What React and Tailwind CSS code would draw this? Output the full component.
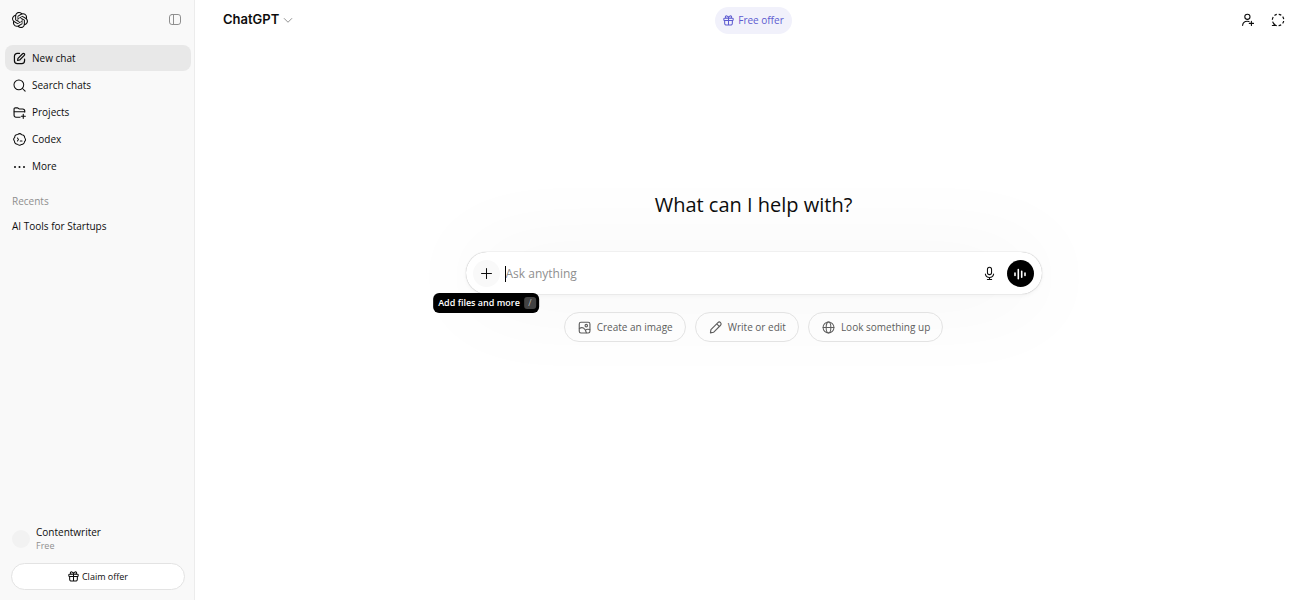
import { SiOpenai } from "react-icons/si";

const Icon = ({ className = "size-[15px]", children, strokeWidth = 1.1 }) => (
  <svg
    viewBox="0 0 16 16"
    fill="none"
    stroke="currentColor"
    strokeWidth={strokeWidth}
    strokeLinecap="round"
    strokeLinejoin="round"
    aria-hidden="true"
    className={`shrink-0 ${className}`}
  >
    {children}
  </svg>
);

const PanelIcon = () => (
  <Icon className="size-4" strokeWidth={1}>
    <rect x="2.5" y="2.5" width="11" height="10" rx="2.4" />
    <path d="M6.5 2.5v10" />
  </Icon>
);

const EditIcon = () => (
  <Icon strokeWidth={1.3}>
    <path d="M8 2.6H5.6A3 3 0 0 0 2.6 5.6v4.8a3 3 0 0 0 3 3h4.8a3 3 0 0 0 3-3V8.6" />
    <path d="M6 10l.4-2.2 4.9-4.9a1.25 1.25 0 0 1 1.8 1.8L8.2 9.6z" />
  </Icon>
);

const SearchIcon = () => (
  <Icon>
    <circle cx="7.3" cy="7.3" r="5.2" />
    <path d="M11.2 11.2l2.8 2.8" />
  </Icon>
);

const ProjectsIcon = () => (
  <Icon strokeWidth={1.2}>
    <path d="M8.5 13H4.2a2 2 0 0 1-2-2V4.4a1.4 1.4 0 0 1 1.4-1.4h2.2c.8 0 1.2 1.3 2.1 1.3h3.5c1.3 0 2.2.8 2.2 2.2v.9" />
    <path d="M2.4 7.2h11M12 9.8v4.4M9.8 12h4.4" />
  </Icon>
);

const CodexIcon = () => (
  <Icon>
    <path d="M6.2 2.6a3 3 0 0 1 4.2.3 3 3 0 0 1 3.1 3.2 3 3 0 0 1-.2 4.2 3 3 0 0 1-3.2 3 3 3 0 0 1-4.3-.2 3 3 0 0 1-3.1-3.2 3 3 0 0 1 .2-4.2 3 3 0 0 1 3.3-3.1z" />
    <path d="M5.8 6.4L6.9 8l-1.1 1.6M8.8 9.7h1.9" />
  </Icon>
);

const MoreIcon = () => (
  <svg viewBox="0 0 16 16" fill="currentColor" aria-hidden="true" className="size-[15px] shrink-0">
    <circle cx="3.2" cy="8.5" r="1.1" />
    <circle cx="8" cy="8.5" r="1.1" />
    <circle cx="12.8" cy="8.5" r="1.1" />
  </svg>
);

const GiftIcon = ({ className = "size-[11px]" }) => (
  <Icon className={className} strokeWidth={1.5}>
    <rect x="1.2" y="4.6" width="13.6" height="3.4" rx="1" />
    <path d="M2.4 8v4a2.6 2.6 0 0 0 2.6 2.6h6a2.6 2.6 0 0 0 2.6-2.6V8M8 4.6v9.8" />
    <path d="M8 4.4C7.6 2.4 6.7 1.4 5.6 1.4a1.5 1.5 0 0 0-1.2 2.8M8 4.4c.4-2 1.3-3 2.4-3a1.5 1.5 0 0 1 1.2 2.8" />
  </Icon>
);

const AddPersonIcon = () => (
  <Icon className="size-4" strokeWidth={1.1}>
    <circle cx="7.4" cy="4.8" r="2.6" />
    <path d="M2.6 13.4c.3-2.7 2.2-4.1 4.6-4.1.7 0 1.200.1 1.800.3M11.400 9.300v4.200M9.300 11.400h4.200" />
  </Icon>
);

const TemporaryChatIcon = () => (
  <Icon className="size-4" strokeWidth={1.2}>
    <path d="M2.400 13.500h3.200l-1.600-1.500" />
    <path
      d="M4 12a5.700 5.700 0 1 1 4 1.700 5.700 5.700 0 0 1-2.400-.5"
      strokeDasharray="2.700 1.900"
      strokeLinecap="butt"
    />
  </Icon>
);

const MicIcon = () => (
  <Icon>
    <rect x="5.800" y="1.400" width="4.400" height="7.800" rx="2.200" />
    <path d="M3.600 8.600a4.500 4.500 0 0 0 8.800 0M8 12.200v2.300M5.700 14.500h4.600" />
  </Icon>
);

const VoiceIcon = () => (
  <Icon className="size-4" strokeWidth={1.600}>
    <path d="M3 7v2.400M6.300 3.600v9.200M9.700 5.200v6M13 7v2.400" />
  </Icon>
);

const ImageIcon = () => (
  <Icon strokeWidth={1.200}>
    <rect x="2.400" y="2.400" width="11.400" height="11.400" rx="1.800" />
    <circle cx="9.900" cy="6" r="1.300" />
    <path d="M2.600 9c3-2 6-.8 7.400 4.600M9.400 10.600c1-1 2.400-1 4.200-.4" />
  </Icon>
);

const PencilIcon = () => (
  <Icon strokeWidth={1.200}>
    <path d="M2.600 13.700l.5-3.400 7.500-7.500a1.900 1.900 0 0 1 2.800 2.800l-7.500 7.500zM9.300 4.200l2.700 2.700" />
  </Icon>
);

const GlobeIcon = () => (
  <Icon>
    <circle cx="8" cy="8" r="5.800" />
    <ellipse cx="8" cy="8" rx="2.500" ry="5.800" />
    <path d="M2.200 8h11.600" />
  </Icon>
);

const NAV_ITEMS = [
  { label: "New chat", icon: EditIcon, active: true },
  { label: "Search chats", icon: SearchIcon },
  { label: "Projects", icon: ProjectsIcon },
  { label: "Codex", icon: CodexIcon },
  { label: "More", icon: MoreIcon },
];

const SUGGESTIONS = [
  { label: "Create an image", icon: ImageIcon },
  { label: "Write or edit", icon: PencilIcon },
  { label: "Look something up", icon: GlobeIcon },
];

const Sidebar = () => (
  <aside className="flex w-[195px] shrink-0 flex-col border-r border-[#ececec] bg-[#f9f9f9]">
    <div className="flex h-10 items-center justify-between pr-[11px] pl-3">
      <a href="#" aria-label="Home">
        <SiOpenai className="size-4" />
      </a>
      <button type="button" aria-label="Close sidebar" className="text-[#8f8f8f]">
        <PanelIcon />
      </button>
    </div>
    <nav className="flex flex-col gap-px pt-[5px] pr-[3px] pl-[5px]">
      {NAV_ITEMS.map(({ label, icon: ItemIcon, active }) => (
        <a
          key={label}
          href="#"
          className={`flex h-[26px] items-center gap-[5px] rounded-lg px-[7px] ${active ? "bg-[#e8e8e8]" : ""}`}
        >
          <ItemIcon />
          {label}
        </a>
      ))}
    </nav>
    <section className="px-3 pt-[10px]">
      <h2 className="flex h-6 items-center text-[#8f8f8f]">Recents</h2>
      <a href="#" className="flex h-[26px] items-center">AI Tools for Startups</a>
    </section>
    <div className="mt-auto flex flex-col gap-[10px] pr-[9px] pb-[10px] pl-[11px]">
      <button type="button" className="flex items-center gap-1.5 pl-px text-left">
        <span className="size-[18px] rounded-full bg-[#f2f2f2]" />
        <span className="flex flex-col leading-[14px]">
          <span>Contentwriter</span>
          <span className="text-[9px] text-[#8f8f8f]">Free</span>
        </span>
      </button>
      <button
        type="button"
        className="flex h-[27px] items-center justify-center gap-[3px] rounded-full border border-[#e3e3e3] bg-white text-[9px] font-medium"
      >
        <GiftIcon className="size-[11px]" />
        Claim offer
      </button>
    </div>
  </aside>
);

const Header = () => (
  <header className="grid h-10 grid-cols-[1fr_auto_1fr] items-center px-7">
    <button
      type="button"
      className="flex items-center gap-[3px] justify-self-start font-['Inter',sans-serif] text-[13px] font-semibold"
    >
      ChatGPT
      <Icon className="size-3 text-[#8f8f8f]" strokeWidth={1.300}>
        <path d="M3 6l5 5 5-5" />
      </Icon>
    </button>
    <button
      type="button"
      className="flex h-[27px] items-center gap-1 rounded-full bg-[#f1f1fb] px-2 font-medium text-[#5d5bd0]"
    >
      <GiftIcon />
      Free offer
    </button>
    <div className="-mr-0.5 flex items-center gap-[14px] justify-self-end">
      <button type="button" aria-label="Start a group chat">
        <AddPersonIcon />
      </button>
      <button type="button" aria-label="Turn on temporary chat">
        <TemporaryChatIcon />
      </button>
    </div>
  </header>
);

const Composer = () => (
  <form className="flex h-[42px] w-full max-w-[576px] items-center rounded-full bg-white pt-px pr-2 pl-[7px] shadow-[0_4px_96px_rgba(0,0,0,0.06),0_0_1px_rgba(0,0,0,0.4),0_2px_4px_rgba(0,0,0,0.04)]">
    <div className="relative">
      <button
        type="button"
        aria-label="Add files and more"
        className="flex size-[27px] items-center justify-center rounded-full bg-[#f9f9f9]"
      >
        <Icon>
          <path d="M8 2.700v10.600M2.700 8h10.600" />
        </Icon>
      </button>
      <div
        role="tooltip"
        className="absolute top-full left-1/2 mt-1.5 flex h-5 -translate-x-1/2 items-center gap-1 rounded-md bg-black pr-[3px] pl-[5px] text-[9px] font-semibold whitespace-nowrap text-white"
      >
        Add files and more
        <kbd className="flex size-3 items-center justify-center rounded-[3px] bg-[#424242] font-['Open_Sans',sans-serif] font-normal text-[#b4b4b4]">
          /
        </kbd>
      </div>
    </div>
    <span className="ml-[5px] h-4 w-px shrink-0 bg-black" />
    <input
      type="text"
      aria-label="Ask anything"
      placeholder="Ask anything"
      className="min-w-0 flex-1 bg-transparent text-xs outline-none placeholder:text-[#8f8f8f]"
    />
    <button type="button" aria-label="Dictate" className="mr-1.5 p-1">
      <MicIcon />
    </button>
    <button
      type="button"
      aria-label="Use voice"
      className="flex size-[27px] items-center justify-center rounded-full bg-black text-white"
    >
      <VoiceIcon />
    </button>
  </form>
);

export default function App() {
  return (
    <div className="flex min-h-screen bg-white font-['Open_Sans','Noto_Sans',sans-serif] text-[10px] text-[#0d0d0d]">
      <Sidebar />
      <div className="flex min-w-0 flex-1 flex-col">
        <Header />
        <main className="flex flex-1 flex-col items-center px-4 pt-[149px]">
          <h1 className="mb-[31px] text-xl leading-8">What can I help with?</h1>
          <Composer />
          <div className="mt-[18px] flex flex-wrap justify-center gap-[9px]">
            {SUGGESTIONS.map(({ label, icon: ItemIcon }) => (
              <button
                key={label}
                type="button"
                className="flex h-[30px] items-center gap-[5px] rounded-full border border-[#e3e3e3] px-3 text-[#5d5d5d]"
              >
                <ItemIcon />
                {label}
              </button>
            ))}
          </div>
        </main>
      </div>
    </div>
  );
}
